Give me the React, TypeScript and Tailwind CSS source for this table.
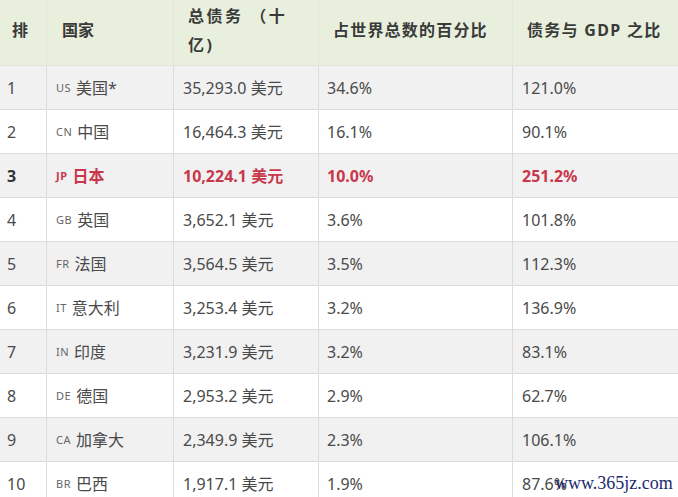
import React from "react";

type Row = { rank: string; code: string; name: string; debt: string; pct: string; gdp: string; hl?: boolean };

const rows: Row[] = [
  { rank: "1", code: "us", name: "美国*", debt: "35,293.0 美元", pct: "34.6%", gdp: "121.0%" },
  { rank: "2", code: "cn", name: "中国", debt: "16,464.3 美元", pct: "16.1%", gdp: "90.1%" },
  { rank: "3", code: "jp", name: "日本", debt: "10,224.1 美元", pct: "10.0%", gdp: "251.2%", hl: true },
  { rank: "4", code: "gb", name: "英国", debt: "3,652.1 美元", pct: "3.6%", gdp: "101.8%" },
  { rank: "5", code: "fr", name: "法国", debt: "3,564.5 美元", pct: "3.5%", gdp: "112.3%" },
  { rank: "6", code: "it", name: "意大利", debt: "3,253.4 美元", pct: "3.2%", gdp: "136.9%" },
  { rank: "7", code: "in", name: "印度", debt: "3,231.9 美元", pct: "3.2%", gdp: "83.1%" },
  { rank: "8", code: "de", name: "德国", debt: "2,953.2 美元", pct: "2.9%", gdp: "62.7%" },
  { rank: "9", code: "ca", name: "加拿大", debt: "2,349.9 美元", pct: "2.3%", gdp: "106.1%" },
  { rank: "10", code: "br", name: "巴西", debt: "1,917.1 美元", pct: "1.9%", gdp: "87.6%" },
];

const font = { fontFamily: "'Noto Sans', 'Noto Sans CJK SC', sans-serif" };

export default function App() {
  return (
    <div className="relative w-[678px] h-[497px] overflow-hidden bg-white text-[#4a4a4a]" style={font}>
      <div className="grid grid-cols-[46px_127px_145px_194px_166px] h-[66px] bg-[#e8f0dd] border-b border-[#dfe6d6] font-bold text-[#3a3a3a] text-[16px]">
        <div className="flex items-center pl-[12px] pb-[6px]">排</div>
        <div className="flex items-center pl-[15px] pb-[6px] border-l border-[#e0e8d6]">国家</div>
        <div className="flex flex-col justify-center pl-[14px] pb-[4px] tracking-[2.5px] leading-[29px] border-l border-[#e0e8d6]">
          <span>总债务 （十</span>
          <span>亿)</span>
        </div>
        <div className="flex items-center pl-[14px] pb-[6px] tracking-[1.2px] border-l border-[#e0e8d6]">占世界总数的百分比</div>
        <div className="flex items-center pl-[14px] pb-[6px] tracking-[1.3px] border-l border-[#e0e8d6]">债务与 GDP 之比</div>
      </div>
      {rows.map((r, i) => {
        const bg = i % 2 === 0 ? "bg-[#f1f1f1]" : "bg-white";
        const txt = r.hl ? "text-[#c8384d] font-bold" : "";
        return (
          <div key={r.rank} className={`grid grid-cols-[46px_127px_145px_194px_166px] h-[44px] border-b border-[#dcdcdc] text-[16px] ${bg}`}>
            <div className={`flex items-center pl-[7px] ${r.hl ? "font-bold text-[#333]" : ""}`}>{r.rank}</div>
            <div className={`flex items-center pl-[9px] border-l border-[#dcdcdc] ${txt}`}>
              <span className={`text-[11px] uppercase tracking-[0.5px] mr-[5px] mt-[2px] ${r.hl ? "text-[#c8384d]" : "text-[#666]"}`}>{r.code}</span>
              <span>{r.name}</span>
            </div>
            <div className={`flex items-center pl-[9px] border-l border-[#dcdcdc] ${txt}`}>{r.debt}</div>
            <div className={`flex items-center pl-[8px] border-l border-[#dcdcdc] ${txt}`}>{r.pct}</div>
            <div className={`flex items-center pl-[9px] border-l border-[#dcdcdc] ${txt}`}>{r.gdp}</div>
          </div>
        );
      })}
      <div
        className="absolute left-[555px] top-[472px] text-[18px] text-[#1c2a6e] leading-[22px]"
        style={{ fontFamily: "'Liberation Serif', serif" }}
      >
        www.365jz.com
      </div>
    </div>
  );
}
